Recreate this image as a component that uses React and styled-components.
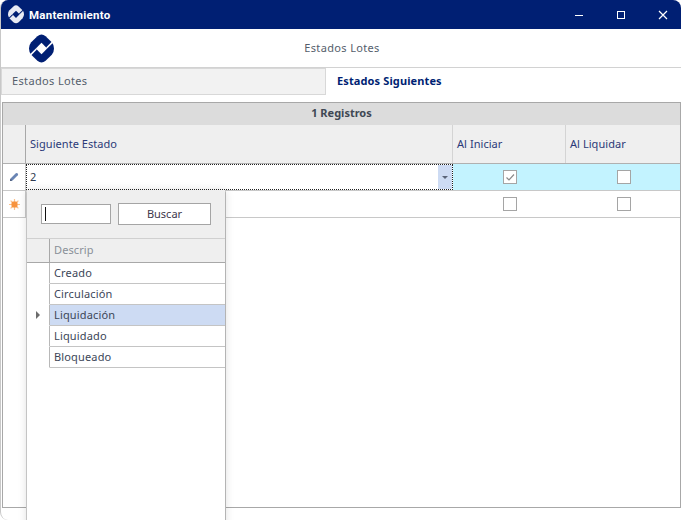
import React from "react";
import styled, { createGlobalStyle } from "styled-components";

const GlobalStyle = createGlobalStyle`
  html, body {
    margin: 0;
    padding: 0;
    background: #ffffff;
  }
  * {
    box-sizing: border-box;
  }
`;

const Win = styled.div`
  position: relative;
  width: 681px;
  height: 520px;
  overflow: hidden;
  display: flex;
  flex-direction: column;
  background: #fff;
  border-left: 1px solid #c8c8c8;
  border-radius: 8px 8px 0 8px;
  font-family: "Noto Sans", "Open Sans", sans-serif;
  font-size: 11px;
  color: #3c4658;
`;

const TitleBar = styled.div`
  height: 29px;
  margin-left: -1px;
  flex: none;
  display: flex;
  align-items: center;
  background: #001f73;
  color: #fff;
  padding-left: 8px;
  font-family: "Roboto", sans-serif;
  font-size: 11.5px;
  font-weight: 700;
`;

const TitleText = styled.span`
  margin-left: 5px;
  letter-spacing: 0.25px;
  flex: 1;
`;

const WinBtn = styled.div`
  width: 42px;
  height: 29px;
  flex: none;
  display: flex;
  align-items: center;
  justify-content: center;
  &:last-child {
    margin-right: -3px;
  }
`;

const Header = styled.div`
  height: 39px;
  flex: none;
  display: grid;
  grid-template-columns: 28px 24px 1fr;
  align-items: center;
  border-bottom: 1px solid #d2d2d2;
`;

const HeaderTitle = styled.div`
  text-align: center;
  padding: 0 50px 1px 0;
  color: #555e6c;
  letter-spacing: 0.35px;
`;

const Tabs = styled.div`
  height: 28px;
  flex: none;
  display: flex;
`;

const Tab = styled.div`
  height: 27px;
  width: ${(p) => (p.$active ? "auto" : "325px")};
  flex: ${(p) => (p.$active ? "1" : "none")};
  display: flex;
  align-items: center;
  padding: 0 0 2px ${(p) => (p.$active ? "11px" : "10px")};
  background: ${(p) => (p.$active ? "#fff" : "#f2f2f2")};
  border: ${(p) => (p.$active ? "none" : "1px solid #d8d8d8")};
  color: ${(p) => (p.$active ? "#001f73" : "#555e6c")};
  font-weight: ${(p) => (p.$active ? "700" : "400")};
  letter-spacing: ${(p) => (p.$active ? "0.12px" : "0.35px")};
`;

const Panel = styled.div`
  margin: 6px 0 12px 1px;
  flex: 1;
  border: 1px solid #a8a8a8;
  display: flex;
  flex-direction: column;
`;

const Band = styled.div`
  height: 22px;
  flex: none;
  background: #dcdcdc;
  display: flex;
  align-items: center;
  justify-content: center;
  padding-bottom: 4px;
  font-weight: 700;
  color: #404854;
`;

const Row = styled.div`
  display: grid;
  grid-template-columns: 23px 427px 113px 1fr;
  height: ${(p) => p.$h}px;
  flex: none;
  border-bottom: 1px solid ${(p) => p.$line || "#c8c8c8"};
  background: ${(p) => p.$bg || "#fff"};
`;

const HeadCell = styled.div`
  display: flex;
  align-items: center;
  padding: 0 0 2px 4px;
  background: #efefef;
  border-right: 1px solid ${(p) => (p.$last ? "transparent" : p.$line || "#d4d4d4")};
  color: #2b3a78;
  letter-spacing: 0.05px;
`;

const Gutter = styled.div`
  display: flex;
  align-items: center;
  justify-content: center;
  background: #fff;
  border-right: 1px solid #c8c8c8;
`;

const ComboCell = styled.div`
  display: flex;
  align-items: stretch;
  background: #fff;
  outline: 1px dotted #222;
  outline-offset: -1px;
  padding: 1px 1px 1px 4px;
`;

const ComboValue = styled.div`
  flex: 1;
  display: flex;
  align-items: center;
  padding-bottom: 1px;
  color: #2f3a50;
`;

const ComboBtn = styled.div`
  width: 14px;
  background: #cddbf3;
  display: flex;
  align-items: center;
  justify-content: center;
`;

const Arrow = styled.div`
  width: 0;
  height: 0;
  border-left: 3px solid transparent;
  border-right: 3px solid transparent;
  border-top: 3px solid #5a6478;
`;

const CheckCell = styled.div`
  display: flex;
  align-items: center;
  justify-content: center;
  padding-left: ${(p) => (p.$last ? "2px" : "0")};
`;

const Check = styled.div`
  width: 14px;
  height: 14px;
  border: 1px solid #a5a5a5;
  background: #fff;
  display: flex;
  align-items: center;
  justify-content: center;
`;

const Popup = styled.div`
  position: absolute;
  left: 25px;
  top: 190px;
  width: 200px;
  height: 340px;
  background: #fff;
  border-left: 1px solid #c4c4c4;
  border-right: 1px solid #b4b4b4;
  box-shadow: 0 0 8px rgba(0, 0, 0, 0.12);
  border-radius: 3px 3px 0 0;
`;

const SearchBar = styled.div`
  height: 49px;
  background: #efefef;
  border-bottom: 1px solid #d0d0d0;
  display: flex;
  align-items: center;
  gap: 7px;
  padding: 0 0 1px 14px;
`;

const SearchInput = styled.div`
  width: 70px;
  height: 20px;
  border: 1px solid #a5a5a5;
  background: #fff;
  display: flex;
  align-items: center;
  padding-left: 3px;
`;

const Caret = styled.div`
  width: 1px;
  height: 14px;
  background: #111;
`;

const SearchBtn = styled.div`
  width: 93px;
  height: 22px;
  border: 1px solid #a5a5a5;
  background: #fff;
  display: flex;
  align-items: center;
  justify-content: center;
  color: #40384c;
`;

const ListRow = styled.div`
  display: grid;
  grid-template-columns: 23px 1fr;
  height: ${(p) => p.$h}px;
`;

const ListGutter = styled.div`
  display: flex;
  align-items: center;
  justify-content: flex-end;
  padding-right: 9px;
  background: ${(p) => (p.$head ? "#efefef" : "#fff")};
  border-right: 1px solid ${(p) => (p.$head ? "#a8a8a8" : "#b8b8b8")};
  border-bottom: 1px solid ${(p) => (p.$head ? "#a8a8a8" : "transparent")};
`;

const ListHead = styled.div`
  display: flex;
  align-items: center;
  padding: 0 0 2px 4px;
  background: #efefef;
  border-bottom: 1px solid #a8a8a8;
  color: #8a8f98;
  letter-spacing: 0.1px;
`;

const ListCell = styled.div`
  display: flex;
  align-items: center;
  padding: 0 0 2px 4px;
  background: ${(p) => (p.$sel ? "#cddbf3" : "#fff")};
  border-bottom: 1px solid #c4c4c4;
  color: #3c4658;
  letter-spacing: 0.15px;
`;

const RowArrow = styled.div`
  width: 0;
  height: 0;
  border-top: 4px solid transparent;
  border-bottom: 4px solid transparent;
  border-left: 4px solid #6c6c6c;
`;

const Logo = ({ size, color, gap }) => (
  <svg width={size} height={size * 1.16} viewBox="0 0 25 29">
    <path
      d="M8.4 2.2 Q12.5 -1.4 16.6 2.2 L22.8 8.2 Q25 10.8 25 14.5 Q25 18.2 22.8 20.8 L16.6 26.8 Q12.5 30.4 8.4 26.8 L2.2 20.8 Q0 18.2 0 14.5 Q0 10.8 2.2 8.2 Z"
      fill={color}
    />
    <path d="M12.5 8.8 L18.2 14.5 L12.5 20.2 L6.8 14.5 Z" fill={gap} />
    <path d="M18.2 14.5 L25 7.7 L23.9 6.6 L17.1 13.4 Z" fill={gap} />
    <path d="M6.8 14.5 L0 21.3 L1.1 22.4 L7.9 15.6 Z" fill={gap} />
  </svg>
);

const Pencil = () => (
  <svg width="10" height="10" viewBox="0 0 10 10">
    <path d="M1 9 L1.6 6.4 L6.8 1.2 Q7.6 0.6 8.4 1.2 L8.9 1.7 Q9.4 2.4 8.8 3.2 L3.6 8.4 Z" fill="#6a85b4" />
    <path d="M1 9 L1.5 6.8 L3.2 8.5 Z" fill="#3f4f6e" />
  </svg>
);

const Star = () => (
  <svg width="11" height="11" viewBox="0 0 11 11">
    <g stroke="#fbc08a" strokeWidth="1.2">
      <path d="M5.5 0 V11 M0 5.5 H11 M1.6 1.6 L9.4 9.4 M9.4 1.6 L1.6 9.4" />
    </g>
    <rect x="2.5" y="2.5" width="6" height="6" rx="1.5" fill="#f7933e" />
  </svg>
);

const Tick = () => (
  <svg width="10" height="10" viewBox="0 0 10 10">
    <path d="M1.5 5.5 L4 8 L9 2.5" fill="none" stroke="#8a8a8a" strokeWidth="1.2" />
  </svg>
);

const DESCRIPS = ["Creado", "Circulación", "Liquidación", "Liquidado", "Bloqueado"];

export default function App() {
  return (
    <>
      <GlobalStyle />
      <Win>
        <TitleBar>
          <Logo size={16} color="#e8ebf3" gap="#001f73" />
          <TitleText>Mantenimiento</TitleText>
          <WinBtn>
            <svg width="10" height="10" viewBox="0 0 10 10">
              <path d="M1 5.5 H9" stroke="#fff" strokeWidth="1" />
            </svg>
          </WinBtn>
          <WinBtn>
            <svg width="10" height="10" viewBox="0 0 10 10">
              <rect x="1.5" y="1.5" width="7" height="7" fill="none" stroke="#fff" strokeWidth="1" />
            </svg>
          </WinBtn>
          <WinBtn>
            <svg width="10" height="10" viewBox="0 0 10 10">
              <path d="M1 1 L9 9 M9 1 L1 9" stroke="#fff" strokeWidth="1.2" />
            </svg>
          </WinBtn>
        </TitleBar>
        <Header>
          <span />
          <Logo size={25} color="#001f73" gap="#fff" />
          <HeaderTitle>Estados Lotes</HeaderTitle>
        </Header>
        <Tabs>
          <Tab>Estados Lotes</Tab>
          <Tab $active>Estados Siguientes</Tab>
        </Tabs>
        <Panel>
          <Band>1 Registros</Band>
          <Row $h={39} $line="#b0b0b0">
            <HeadCell $line="#a8a8a8" />
            <HeadCell>Siguiente Estado</HeadCell>
            <HeadCell>Al Iniciar</HeadCell>
            <HeadCell $last>Al Liquidar</HeadCell>
          </Row>
          <Row $h={27} $bg="#c3f3ff">
            <Gutter>
              <Pencil />
            </Gutter>
            <ComboCell>
              <ComboValue>2</ComboValue>
              <ComboBtn>
                <Arrow />
              </ComboBtn>
            </ComboCell>
            <CheckCell>
              <Check>
                <Tick />
              </Check>
            </CheckCell>
            <CheckCell $last>
              <Check />
            </CheckCell>
          </Row>
          <Row $h={27}>
            <Gutter>
              <Star />
            </Gutter>
            <div />
            <CheckCell>
              <Check />
            </CheckCell>
            <CheckCell $last>
              <Check />
            </CheckCell>
          </Row>
        </Panel>
        <Popup>
          <SearchBar>
            <SearchInput>
              <Caret />
            </SearchInput>
            <SearchBtn>Buscar</SearchBtn>
          </SearchBar>
          <ListRow $h={24}>
            <ListGutter $head />
            <ListHead>Descrip</ListHead>
          </ListRow>
          {DESCRIPS.map((d, i) => (
            <ListRow key={d} $h={21}>
              <ListGutter>{i === 2 && <RowArrow />}</ListGutter>
              <ListCell $sel={i === 2}>{d}</ListCell>
            </ListRow>
          ))}
        </Popup>
      </Win>
    </>
  );
}
